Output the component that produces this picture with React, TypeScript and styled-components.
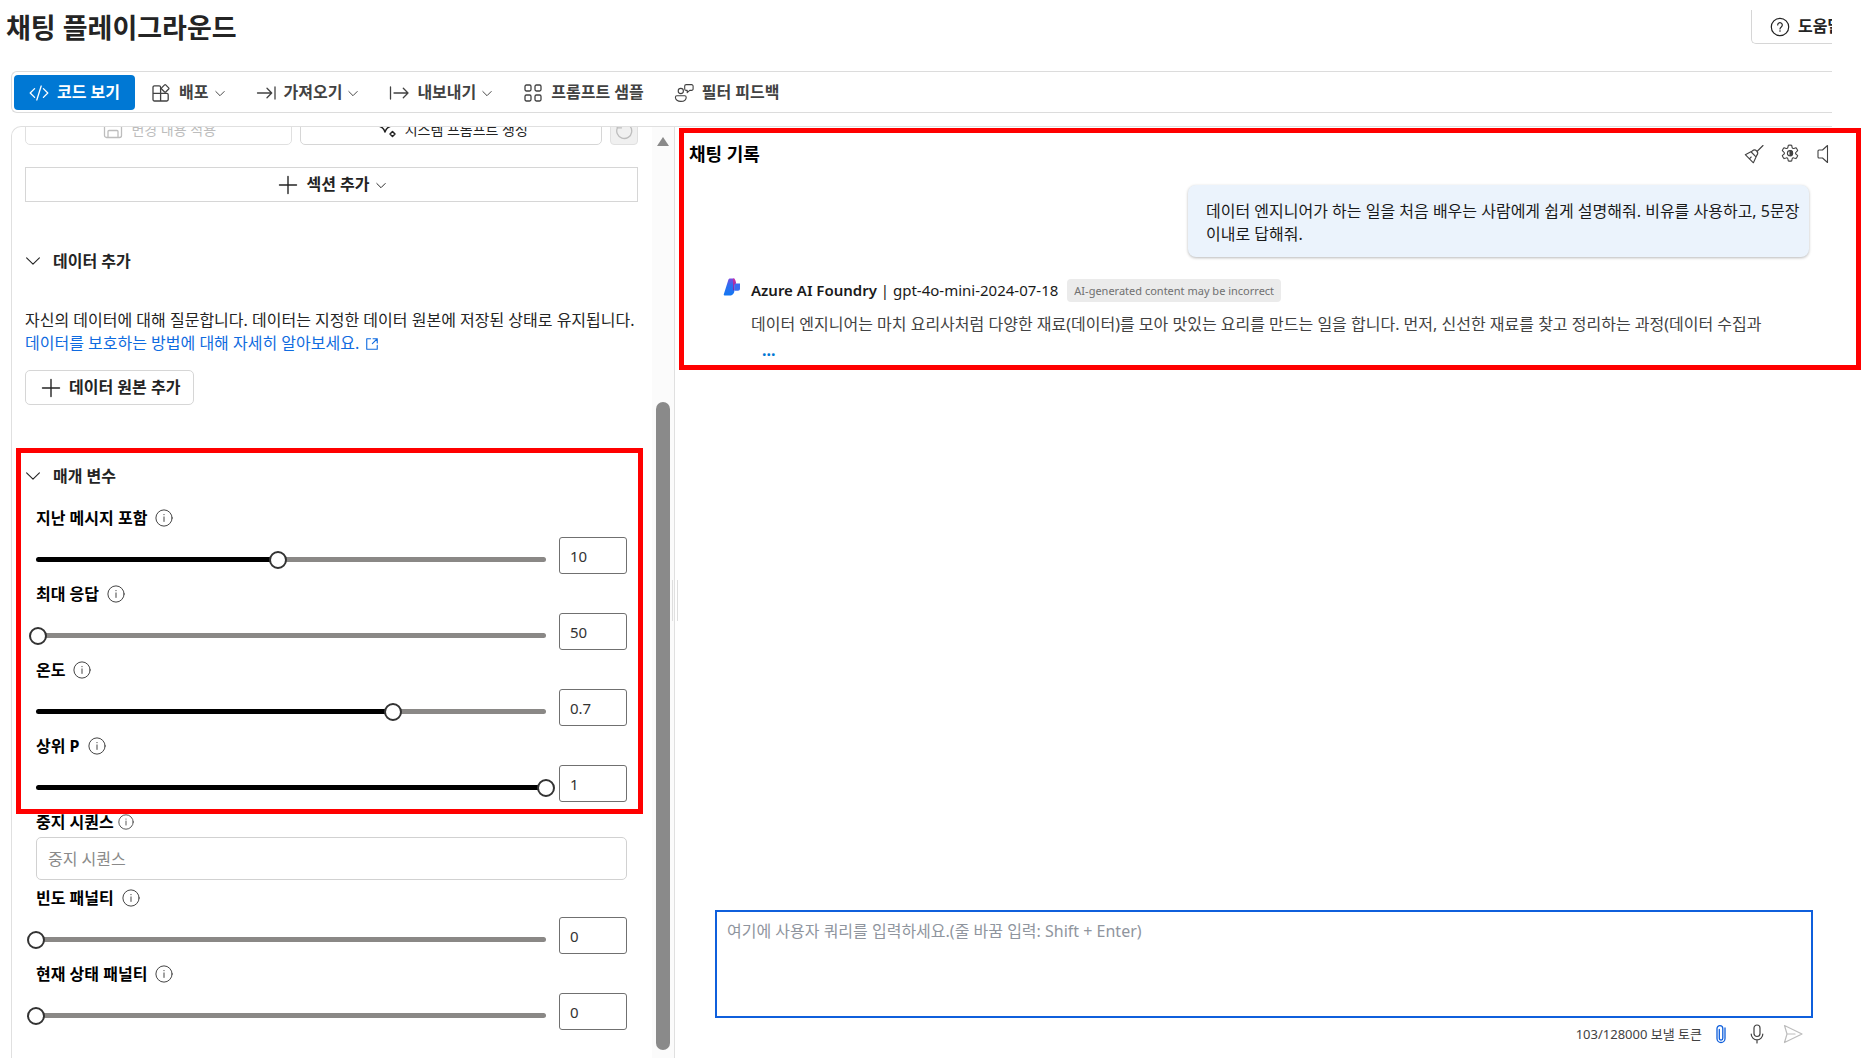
import React, { useState } from "react";
import styled, { createGlobalStyle, css } from "styled-components";

const GlobalStyle = createGlobalStyle`
  *, *::before, *::after { box-sizing: border-box; }
  body {
    margin: 0;
    background: #fff;
    color: #242424;
    font-family: "Noto Sans", "Noto Sans CJK KR", sans-serif;
    font-size: 16px;
    line-height: 23px;
    overflow: hidden;
  }
  button, input, textarea { font: inherit; color: inherit; }
  h1, h2, h3, p { margin: 0; }
`;

/* ---------- icons ---------- */

const Svg = styled.svg`
  display: block;
  flex: none;
  overflow: visible;
`;

type IconProps = { size?: number; stroke?: number; children?: React.ReactNode };

const Icon = ({ size = 20, stroke = 1.1, children }: IconProps) => (
  <Svg
    width={size}
    height={size}
    viewBox="0 0 20 20"
    fill="none"
    stroke="currentColor"
    strokeWidth={stroke}
    strokeLinecap="round"
    strokeLinejoin="round"
    aria-hidden="true"
  >
    {children}
  </Svg>
);

const CodeIcon = () => (
  <Icon stroke={1.3}>
    <path d="M5.600 5.600 1.200 10l4.400 4.400M14.400 5.600l4.400 4.400-4.400 4.400M12.200 3 7.800 17" />
  </Icon>
);
const DeployIcon = () => (
  <Icon stroke={1.3}>
    <path d="M9.600 10.400V4.200a1.400 1.400 0 0 0-1.400-1.400H3.400A1.400 1.400 0 0 0 2 4.200v12.400A1.400 1.400 0 0 0 3.400 18h12.400a1.400 1.400 0 0 0 1.400-1.400v-4.800a1.400 1.400 0 0 0-1.400-1.400H2M9.600 10.400V18" />
    <path d="m13.600 1.900-3 3a.8.8 0 0 0 0 1.100l3 3a.8.8 0 0 0 1.100 0l3-3a.8.8 0 0 0 0-1.100l-3-3a.8.8 0 0 0-1.100 0Z" />
  </Icon>
);
const ImportIcon = () => (
  <Icon stroke={1.3}>
    <path d="M1.500 10h14M11 5.200l4.700 4.800-4.700 4.800M19 4v12" />
  </Icon>
);
const ExportIcon = () => (
  <Icon stroke={1.3}>
    <path d="M1.500 4v12M5 10h14M14.300 5.200 19 10l-4.700 4.800" />
  </Icon>
);
const GridIcon = () => (
  <Icon stroke={1.3}>
    <rect x="2" y="2" width="6" height="6" rx="1.400" />
    <rect x="12" y="2" width="6" height="6" rx="1.400" />
    <rect x="2" y="12" width="6" height="6" rx="1.400" />
    <rect x="12" y="12" width="6" height="6" rx="1.400" />
  </Icon>
);
const FeedbackIcon = () => (
  <Icon>
    <circle cx="6.800" cy="8" r="2.600" />
    <path d="M2.900 12.700h7.800a1.500 1.500 0 0 1 1.500 1.500c0 2.600-2.300 4.200-5.400 4.200s-5.400-1.600-5.400-4.200a1.500 1.500 0 0 1 1.500-1.500Z" />
    <path d="M12.200 1.600h5.400a1.500 1.500 0 0 1 1.500 1.500v2.800a1.500 1.500 0 0 1-1.500 1.500h-1.900l-2.500 2.200V7.400h-1a1.500 1.500 0 0 1-1.500-1.500V3.100a1.500 1.500 0 0 1 1.500-1.500Z" />
  </Icon>
);
const ChevronIcon = ({ size = 12 }: { size?: number }) => (
  <Icon size={size} stroke={size > 14 ? 1.4 : 1.6}>
    <path d={size > 14 ? "m2 6 8 8 8-8" : "m3 7.500 7 7 7-7"} />
  </Icon>
);
const SaveIcon = () => (
  <Icon stroke={1.3}>
    <path d="M3.500 1.500h11L18.500 5v11.500a2 2 0 0 1-2 2h-13a2 2 0 0 1-2-2v-13a2 2 0 0 1 2-2ZM5 18.500v-6a1 1 0 0 1 1-1h8a1 1 0 0 1 1 1v6M6 1.500V5a1 1 0 0 0 1 1h5a1 1 0 0 0 1-1V1.500" />
  </Icon>
);
const SparkleIcon = () => (
  <Icon stroke={1.5}>
    <path d="M3 7.500c2.500.8 4 2.300 5 5.500 1-3.200 2.500-4.700 5-5.500-2.500-.8-4-2.300-5-5.500-1 3.200-2.500 4.700-5 5.500Z" />
    <path d="m15.500 12.500 2.500 2.500-2.500 2.500L13 15Z" />
  </Icon>
);
const ResetIcon = () => (
  <Icon stroke={1.3}>
    <path d="M3.600 6.500A7.500 7.500 0 1 0 10 2.500M3.200 2.500v4.300h4.300" />
  </Icon>
);
const PlusIcon = () => (
  <Icon stroke={1.4}>
    <path d="M10 1.500v17M1.500 10h17" />
  </Icon>
);
const LinkOutIcon = () => (
  <Icon size={14} stroke={1.6}>
    <path d="M8 2.500H2.500v15h15V12M11.500 2.500h6v6M17.500 2.500 10.500 9.500" />
  </Icon>
);
const InfoIcon = ({ size = 18 }: { size?: number }) => (
  <Icon size={size}>
    <circle cx="10" cy="10" r="9" />
    <path d="M10 8.800v5" />
    <circle cx="10" cy="6.200" r=".7" fill="currentColor" stroke="none" />
  </Icon>
);
const HelpIcon = () => (
  <Icon stroke={1.2}>
    <circle cx="10" cy="10" r="8.700" />
    <path d="M7.700 8a2.300 2.300 0 1 1 3.600 1.900c-.8.600-1.300 1-1.300 2" />
    <circle cx="10" cy="14" r=".8" fill="currentColor" stroke="none" />
  </Icon>
);
const BroomIcon = () => (
  <Icon>
    <path d="m19 1.500-6 6M8.300 7c1.500-1.400 3.200-1.200 4.400 0s1.400 3 0 4.500L9.400 18.800 1.300 10.700ZM7.200 8l4.800 4.800M5.400 14.800l1.800-1.800" />
  </Icon>
);
const GearIcon = () => (
  <Icon>
    <path d="M8.300 1.300a8.800 8.800 0 0 1 3.400 0l.4 2.100a1.300 1.300 0 0 0 1.800 1l2-.7a8.800 8.800 0 0 1 1.800 3l-1.600 1.400a1.300 1.300 0 0 0 0 2.100l1.600 1.400a8.800 8.800 0 0 1-1.800 3l-2-.7a1.300 1.300 0 0 0-1.800 1l-.4 2.100a8.800 8.800 0 0 1-3.400 0l-.4-2.100a1.300 1.300 0 0 0-1.800-1l-2 .7a8.800 8.800 0 0 1-1.800-3l1.600-1.400a1.300 1.300 0 0 0 0-2.100L2.300 6.700a8.800 8.800 0 0 1 1.800-3l2 .7a1.300 1.300 0 0 0 1.800-1Z" />
    <circle cx="10" cy="9.200" r="2.600" />
    <path d="M10 6.600a2.600 2.600 0 0 1 0 5.200Z" fill="currentColor" />
  </Icon>
);
const SpeakerIcon = () => (
  <Icon>
    <path d="M11.500 1.500v17L6.500 14H3a1 1 0 0 1-1-1V7a1 1 0 0 1 1-1h3.500Z" />
  </Icon>
);
const ClipIcon = () => (
  <Icon stroke={1.3}>
    <path d="M14 4v10.500a4 4 0 0 1-8 0V4.500a2.900 2.900 0 0 1 5.800 0v9.800a1.700 1.700 0 0 1-3.500 0V5.500" />
  </Icon>
);
const MicIcon = () => (
  <Icon stroke={1.2}>
    <rect x="7" y="1" width="6" height="11.500" rx="3" />
    <path d="M4.200 10a5.800 5.800 0 0 0 11.600 0M10 16v3" />
  </Icon>
);
const SendIcon = () => (
  <Icon stroke={1.2}>
    <path d="M1.500 1.500 19 10 1.500 18.500 4 10ZM4 10h8" />
  </Icon>
);
const FoundryLogo = () => (
  <Svg width="18" height="18" viewBox="0 0 18 18" aria-hidden="true">
    <defs>
      <linearGradient id="body" x1="0" y1="0" x2="0" y2="1">
        <stop offset="0" stopColor="#7b4be0" />
        <stop offset=".4" stopColor="#2f6df0" />
        <stop offset="1" stopColor="#1478f2" />
      </linearGradient>
      <linearGradient id="fold" x1="0" y1="0" x2="0" y2="1">
        <stop offset="0" stopColor="#d72f9a" />
        <stop offset="1" stopColor="#6a2bb8" />
      </linearGradient>
    </defs>
    <path d="M7 .5h4.500v11c0 3.500-1.500 6-4.500 6H1.500C.8 17.500.6 17 .8 16.300L5.300 2C5.600 1 6.200.5 7 .5Z" fill="url(#body)" />
    <path d="M10 .5c1.600 0 2.200 1 2.600 2.500l.6 2.500c-1.500.4-1.700 1.500-1.700 3V12l-1.500.5Z" fill="url(#fold)" />
    <path d="M13.400 5.500H17v5.300c0 1.200-.8 2-2 2h-3.500V7.500c0-1.200.8-2 1.900-2Z" fill="#3b6cf0" />
  </Svg>
);

/* ---------- page frame ---------- */

const Page = styled.div`
  height: 100vh;
  padding-right: 36px;
  display: flex;
  flex-direction: column;
`;
const Header = styled.header`
  display: flex;
  justify-content: space-between;
  height: 71px;
  padding: 10px 0 0 6px;
  overflow: hidden;
`;
const Title = styled.h1`
  font-size: 27px;
  line-height: 36px;
  font-weight: 700;
`;
const HelpButton = styled.button`
  display: flex;
  align-items: center;
  gap: 8px;
  width: 81px;
  height: 34px;
  padding: 0 0 0 18px;
  background: #fff;
  border: solid #d6d6d6;
  border-width: 0 0 1px 1px;
  border-radius: 0 0 0 5px;
  font-weight: 700;
  white-space: nowrap;
  overflow: hidden;
`;
const Toolbar = styled.nav`
  flex: none;
  display: flex;
  align-items: center;
  gap: 2px;
  height: 42px;
  margin-left: 11px;
  padding: 1px 0 0 2px;
  border: 1px solid #dcdcdc;
  border-right: 0;
  border-radius: 6px 0 0 6px;
`;
const ToolButton = styled.button<{ $primary?: boolean }>`
  display: flex;
  align-items: center;
  gap: 8px;
  height: 35px;
  padding: 0 14px;
  border: 0;
  border-radius: 4px;
  background: transparent;
  color: #424242;
  font-weight: 700;
  white-space: nowrap;
  ${(p) =>
    p.$primary &&
    css`
      padding: 0 15px;
      background: #0078d4;
      color: #fff;
    `}
`;
const WithCaret = styled.span`
  display: flex;
  align-items: center;
  gap: 5px;
`;
const Workspace = styled.main`
  flex: 1;
  min-height: 0;
  display: flex;
  margin: 13px 0 0 11px;
  border: solid #e0e0e0;
  border-width: 1px 0 0 1px;
  border-radius: 10px 0 0 0;
`;

/* ---------- setup pane ---------- */

const Pane = styled.section`
  flex: none;
  display: flex;
  width: 663px;
  border-right: 1px solid #e0e0e0;
  position: relative;
`;
const PaneView = styled.div`
  flex: 1;
  overflow: hidden;
  border-radius: 9px 0 0 0;
`;
/* The pane is shown scrolled down, so its first row is partly out of view. */
const PaneContent = styled.div`
  display: flex;
  flex-direction: column;
  margin-top: -14px;
  padding: 0 14px 0 13px;
`;
const PromptRow = styled.div`
  display: flex;
  gap: 8px;
`;
const OutlineButton = styled.button<{ $kind?: "section" | "small"; $grow?: number }>`
  display: flex;
  align-items: center;
  justify-content: center;
  gap: 8px;
  height: 35px;
  padding: 0 13px 0 15px;
  background: #fff;
  border: 1px solid #d6d6d6;
  border-radius: 5px;
  font-weight: 700;
  align-self: flex-start;
  ${(p) =>
    p.$kind === "small" &&
    css`
      flex: ${p.$grow} 1 0;
      height: 32px;
      font-size: 14px;
      font-weight: 400;
      &:disabled { color: #bdbdbd; border-color: #e0e0e0; }
    `}
  ${(p) =>
    p.$kind === "section" &&
    css`
      align-self: stretch;
      margin-top: 22px;
      border-radius: 0;
    `}
`;
const ResetButton = styled.button`
  display: grid;
  place-items: end center;
  width: 28px;
  height: 32px;
  padding: 0 0 3px;
  border: 1px solid #e0e0e0;
  border-radius: 4px;
  background: #f0f0f0;
  color: #bdbdbd;
`;
const SectionToggle = styled.button`
  display: flex;
  align-items: center;
  gap: 12px;
  align-self: flex-start;
  height: 24px;
  padding: 0;
  border: 0;
  background: none;
  font-weight: 700;
`;
const DataSection = styled.section`
  display: flex;
  flex-direction: column;
  margin-top: 47px;
`;
const DataText = styled.p`
  margin: 36px 0 15px;
  white-space: nowrap;
`;
const TextLink = styled.a`
  display: flex;
  align-items: center;
  gap: 6px;
  color: #0f6be0;
  text-decoration: none;
`;
const ParamSection = styled.section`
  display: flex;
  flex-direction: column;
  margin-top: 59px;
  position: relative;
`;
const Fields = styled.div`
  display: flex;
  flex-direction: column;
  padding: 18px 11px 0;
  color: #000;
`;
const Field = styled.div`
  display: flex;
  flex-direction: column;
  gap: 7px;
  padding-bottom: 8px;
`;
const FieldHead = styled.div<{ $tight?: boolean }>`
  display: flex;
  align-items: center;
  gap: ${(p) => (p.$tight ? 4 : 8)}px;
  height: 24px;
  color: #424242;
`;
const FieldLabel = styled.label`
  color: #000;
  font-weight: 700;
`;
const FieldRow = styled.div`
  display: flex;
  gap: 13px;
`;
const SliderBox = styled.div`
  flex: 1;
  display: grid;
  align-items: center;
  padding-top: 8px;
`;
const Track = styled.div`
  grid-area: 1 / 1;
  height: 5px;
  border-radius: 3px;
`;
const Range = styled.input`
  grid-area: 1 / 1;
  appearance: none;
  width: calc(100% + 18px);
  height: 18px;
  margin: 0 -9px;
  background: transparent;
  &::-webkit-slider-thumb {
    appearance: none;
    width: 18px;
    height: 18px;
    border: 2px solid #333;
    border-radius: 50%;
    background: #fff;
  }
`;
const NumberBox = styled.input`
  width: 68px;
  height: 37px;
  padding: 0 10px;
  border: 1px solid #707070;
  border-radius: 3px;
  color: #333;
  background: #fff;
  font-size: 15px;
`;
const StopField = styled.div`
  display: flex;
  flex-direction: column;
  gap: 3px;
  padding-bottom: 6px;
`;
const StopInput = styled.input`
  height: 43px;
  padding: 0 11px;
  border: 1px solid #d1d1d1;
  border-radius: 5px;
  background: #fff;
  &::placeholder { color: #8a8a8a; opacity: 1; }
`;
const ScrollRail = styled.div`
  flex: none;
  width: 22px;
  display: flex;
  flex-direction: column;
  align-items: center;
  padding: 10px 0 8px;
  background: #fbfbfb;
`;
const ScrollUp = styled.div`
  border: solid transparent;
  border-width: 0 6px 9px;
  border-bottom-color: #8a8a8a;
`;
const ScrollThumb = styled.div`
  width: 14px;
  height: 71%;
  margin-top: auto;
  border-radius: 7px;
  background: #8a8a8a;
`;
const Splitter = styled.div`
  position: absolute;
  right: -4px;
  top: 453px;
  width: 6px;
  height: 41px;
  border: solid #dedede;
  border-width: 0 1px;
`;
const Highlight = styled.div<{ $inset: string }>`
  position: absolute;
  inset: ${(p) => p.$inset};
  border: 5px solid #f00;
  pointer-events: none;
`;

/* ---------- chat ---------- */

const Chat = styled.section`
  flex: 1;
  min-width: 0;
  display: flex;
  flex-direction: column;
  justify-content: space-between;
`;
const History = styled.div`
  position: relative;
  height: 243px;
  padding: 14px 0 0 14px;
`;
const ChatHead = styled.div`
  display: flex;
  align-items: center;
  justify-content: space-between;
  color: #000;
`;
const ChatTitle = styled.h2`
  font-size: 18px;
  line-height: 26px;
  font-weight: 700;
`;
const ChatActions = styled.div`
  display: flex;
  gap: 16px;
  width: 88px;
  overflow: hidden;
`;
const IconButton = styled.button<{ $tone?: string }>`
  display: block;
  padding: 0;
  border: 0;
  background: none;
  color: ${(p) => p.$tone ?? "#424242"};
`;
const Bubble = styled.p`
  width: 621px;
  margin: 18px 23px 0 auto;
  padding: 15px 6px 11px 18px;
  border-radius: 8px;
  background: #ebf3fc;
  box-shadow: 0 1px 3px rgba(0, 0, 0, 0.28);
  color: #1a1a1a;
`;
const Answer = styled.article`
  display: flex;
  gap: 10px;
  margin: 21px 40px 0 34px;
`;
const AnswerBody = styled.div`
  display: flex;
  flex-direction: column;
  align-items: flex-start;
`;
const AnswerHead = styled.div`
  display: flex;
  align-items: center;
  gap: 9px;
  margin: 1px 0 11px;
  color: #1a1a1a;
  font-size: 15px;
`;
const Name = styled.strong`
  font-weight: 600;
`;
const Tag = styled.span`
  padding: 0 7px;
  border-radius: 4px;
  background: #ebebeb;
  color: #707070;
  font-size: 11px;
`;
const AnswerText = styled.p`
  color: #424242;
  white-space: nowrap;
`;
const MoreButton = styled.button`
  margin: 3px 0 0 11px;
  padding: 0;
  border: 0;
  background: none;
  color: #0078d4;
  font-weight: 700;
`;
const Composer = styled.form`
  display: flex;
  flex-direction: column;
  margin: 0 19px 10px 40px;
`;
const Query = styled.textarea`
  height: 108px;
  padding: 8px 10px;
  border: 2px solid #0f5fdc;
  border-radius: 0;
  outline: 0;
  resize: none;
  &::placeholder { color: #8f959e; opacity: 1; }
`;
const ComposerFoot = styled.div`
  display: flex;
  align-items: center;
  justify-content: flex-end;
  gap: 9px;
  height: 28px;
  margin-top: 2px;
  padding-right: 10px;
  color: #424242;
  font-size: 13px;
`;
const FootActions = styled.div`
  display: flex;
  gap: 16px;
`;

/* ---------- parts ---------- */

type ParamProps = { id: string; label: string; initial: string; min: number; max: number; step: number };

const Param = ({ id, label, initial, min, max, step }: ParamProps) => {
  const [value, setValue] = useState(initial);
  const fill = ((Number(value) - min) / (max - min)) * 100;
  return (
    <Field>
      <FieldHead>
        <FieldLabel htmlFor={id}>{label}</FieldLabel>
        <InfoIcon />
      </FieldHead>
      <FieldRow>
        <SliderBox>
          <Track style={{ background: `linear-gradient(to right, #000 ${fill}%, #8a8886 ${fill}%)` }} />
          <Range
            id={id}
            type="range"
            min={min}
            max={max}
            step={step}
            value={value}
            onChange={(e) => setValue(e.target.value)}
          />
        </SliderBox>
        <NumberBox aria-label={label} value={value} onChange={(e) => setValue(e.target.value)} />
      </FieldRow>
    </Field>
  );
};

export default function App() {
  return (
    <Page lang="ko">
      <GlobalStyle />
      <Header>
        <Title>채팅 플레이그라운드</Title>
        <HelpButton>
          <HelpIcon />
          도움말
        </HelpButton>
      </Header>

      <Toolbar>
        <ToolButton $primary>
          <CodeIcon />
          코드 보기
        </ToolButton>
        <ToolButton>
          <DeployIcon />
          <WithCaret>배포<ChevronIcon /></WithCaret>
        </ToolButton>
        <ToolButton>
          <ImportIcon />
          <WithCaret>가져오기<ChevronIcon /></WithCaret>
        </ToolButton>
        <ToolButton>
          <ExportIcon />
          <WithCaret>내보내기<ChevronIcon /></WithCaret>
        </ToolButton>
        <ToolButton>
          <GridIcon />
          프롬프트 샘플
        </ToolButton>
        <ToolButton>
          <FeedbackIcon />
          필터 피드백
        </ToolButton>
      </Toolbar>

      <Workspace>
        <Pane>
          <PaneView>
            <PaneContent>
              <PromptRow>
                <OutlineButton $kind="small" $grow={265} disabled>
                  <SaveIcon />
                  변경 내용 적용
                </OutlineButton>
                <OutlineButton $kind="small" $grow={303}>
                  <SparkleIcon />
                  시스템 프롬프트 생성
                </OutlineButton>
                <ResetButton aria-label="초기화" disabled>
                  <ResetIcon />
                </ResetButton>
              </PromptRow>
              <OutlineButton $kind="section">
                <PlusIcon />
                <WithCaret>섹션 추가<ChevronIcon /></WithCaret>
              </OutlineButton>

              <DataSection>
                <SectionToggle>
                  <ChevronIcon size={16} />
                  데이터 추가
                </SectionToggle>
                <DataText>
                  자신의 데이터에 대해 질문합니다. 데이터는 지정한 데이터 원본에 저장된 상태로 유지됩니다.
                  <TextLink href="#data">
                    데이터를 보호하는 방법에 대해 자세히 알아보세요.
                    <LinkOutIcon />
                  </TextLink>
                </DataText>
                <OutlineButton>
                  <PlusIcon />
                  데이터 원본 추가
                </OutlineButton>
              </DataSection>

              <ParamSection>
                <SectionToggle>
                  <ChevronIcon size={16} />
                  매개 변수
                </SectionToggle>
                <Fields>
                  <Param id="past" label="지난 메시지 포함" initial="10" min={1} max={20} step={1} />
                  <Param id="max" label="최대 응답" initial="50" min={0} max={16384} step={1} />
                  <Param id="temp" label="온도" initial="0.7" min={0} max={1} step={0.01} />
                  <Param id="topp" label="상위 P" initial="1" min={0} max={1} step={0.01} />
                  <StopField>
                    <FieldHead $tight>
                      <FieldLabel htmlFor="stop">중지 시퀀스</FieldLabel>
                      <InfoIcon size={16} />
                    </FieldHead>
                    <StopInput id="stop" placeholder="중지 시퀀스" />
                  </StopField>
                  <Param id="freq" label="빈도 패널티" initial="0" min={0} max={2} step={0.01} />
                  <Param id="pres" label="현재 상태 패널티" initial="0" min={0} max={2} step={0.01} />
                </Fields>
                <Highlight $inset="-16px -5px 224px -9px" />
              </ParamSection>
            </PaneContent>
          </PaneView>
          <ScrollRail>
            <ScrollUp />
            <ScrollThumb />
          </ScrollRail>
          <Splitter />
        </Pane>

        <Chat>
          <History>
            <ChatHead>
              <ChatTitle>채팅 기록</ChatTitle>
              <ChatActions>
                <IconButton aria-label="채팅 지우기"><BroomIcon /></IconButton>
                <IconButton aria-label="설정"><GearIcon /></IconButton>
                <IconButton aria-label="소리"><SpeakerIcon /></IconButton>
              </ChatActions>
            </ChatHead>
            <Bubble>
              데이터 엔지니어가 하는 일을 처음 배우는 사람에게 쉽게 설명해줘. 비유를 사용하고, 5문장 이내로 답해줘.
            </Bubble>
            <Answer>
              <FoundryLogo />
              <AnswerBody>
                <AnswerHead>
                  <span><Name>Azure AI Foundry</Name> | gpt-4o-mini-2024-07-18</span>
                  <Tag>AI-generated content may be incorrect</Tag>
                </AnswerHead>
                <AnswerText>
                  데이터 엔지니어는 마치 요리사처럼 다양한 재료(데이터)를 모아 맛있는 요리를 만드는 일을 합니다. 먼저, 신선한 재료를 찾고 정리하는 과정(데이터 수집과
                </AnswerText>
                <MoreButton aria-label="더 보기">...</MoreButton>
              </AnswerBody>
            </Answer>
            <Highlight $inset="1px -29px 0 4px" />
          </History>

          <Composer>
            <Query aria-label="사용자 쿼리" placeholder="여기에 사용자 쿼리를 입력하세요.(줄 바꿈 입력: Shift + Enter)" />
            <ComposerFoot>
              <span>103/128000 보낼 토큰</span>
              <FootActions>
                <IconButton type="button" $tone="#0f5fdc" aria-label="첨부"><ClipIcon /></IconButton>
                <IconButton type="button" aria-label="음성"><MicIcon /></IconButton>
                <IconButton type="button" $tone="#bdbdbd" aria-label="보내기"><SendIcon /></IconButton>
              </FootActions>
            </ComposerFoot>
          </Composer>
        </Chat>
      </Workspace>
    </Page>
  );
}
